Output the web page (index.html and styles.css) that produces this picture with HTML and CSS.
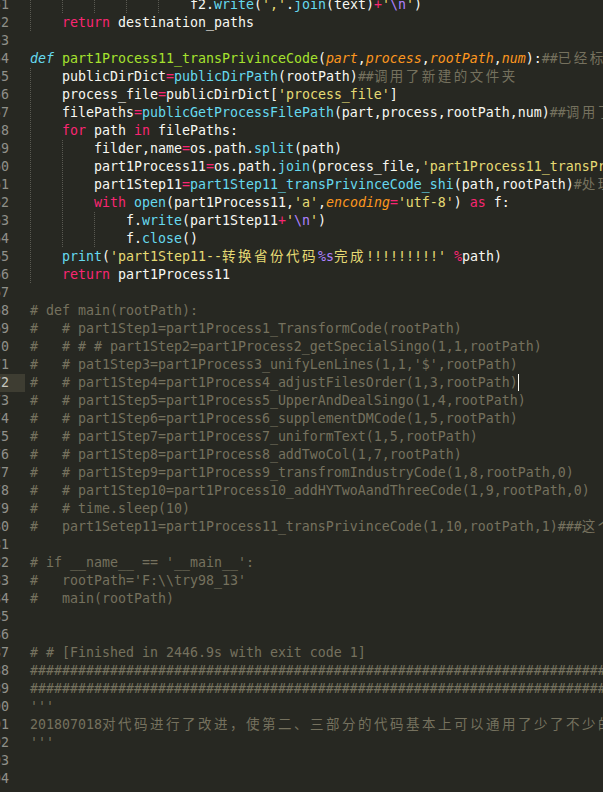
FILE: index.html
```html
<!DOCTYPE html>
<html>
<head>
<meta charset="utf-8">
<link rel="stylesheet" href="styles.css">
</head>
<body>
<div class="editor">
<div class="row"><span class="num">51</span><span class="code"><span class="g"></span><span class="g"></span><span class="g"></span><span class="g"></span><span class="g"></span>f2.<span class="f">write</span>(<span class="s">','</span>.<span class="f">join</span>(text)<span class="o">+</span><span class="s">'<span class="e">\n</span>'</span>)</span></div>
<div class="row"><span class="num">52</span><span class="code"><span class="g"></span><span class="k">return</span> destination_paths</span></div>
<div class="row"><span class="num">53</span><span class="code"></span></div>
<div class="row"><span class="num">54</span><span class="code"><span class="d">def</span> <span class="n">part1Process11_transPrivinceCode</span>(<span class="p">part</span>,<span class="p">process</span>,<span class="p">rootPath</span>,<span class="p">num</span>):<span class="c">##<span class="cj">已经标注的</span></span></span></div>
<div class="row"><span class="num">55</span><span class="code"><span class="g"></span>publicDirDict<span class="o">=</span><span class="f">publicDirPath</span>(rootPath)<span class="c">##<span class="cj">调用了新建的文件夹</span></span></span></div>
<div class="row"><span class="num">56</span><span class="code"><span class="g"></span>process_file<span class="o">=</span>publicDirDict[<span class="s">'process_file'</span>]</span></div>
<div class="row"><span class="num">57</span><span class="code"><span class="g"></span>filePaths<span class="o">=</span><span class="f">publicGetProcessFilePath</span>(part,process,rootPath,num)<span class="c">##<span class="cj">调用了新建的函数</span></span></span></div>
<div class="row"><span class="num">58</span><span class="code"><span class="g"></span><span class="k">for</span> path <span class="k">in</span> filePaths:</span></div>
<div class="row"><span class="num">59</span><span class="code"><span class="g"></span><span class="g"></span>filder,name<span class="o">=</span>os.path.<span class="f">split</span>(path)</span></div>
<div class="row"><span class="num">60</span><span class="code"><span class="g"></span><span class="g"></span>part1Process11<span class="o">=</span>os.path.<span class="f">join</span>(process_file,<span class="s">'part1Process11_transPrivinceCode.txt'</span>)</span></div>
<div class="row"><span class="num">61</span><span class="code"><span class="g"></span><span class="g"></span>part1Step11<span class="o">=</span><span class="f">part1Step11_transPrivinceCode_shi</span>(path,rootPath)<span class="c">#<span class="cj">处理</span></span></span></div>
<div class="row"><span class="num">62</span><span class="code"><span class="g"></span><span class="g"></span><span class="k">with</span> <span class="f">open</span>(part1Process11,<span class="s">'a'</span>,<span class="p">encoding</span><span class="o">=</span><span class="s">'utf-8'</span>) <span class="k">as</span> f:</span></div>
<div class="row"><span class="num">63</span><span class="code"><span class="g"></span><span class="g"></span><span class="g"></span>f.<span class="f">write</span>(part1Step11<span class="o">+</span><span class="s">'<span class="e">\n</span>'</span>)</span></div>
<div class="row"><span class="num">64</span><span class="code"><span class="g"></span><span class="g"></span><span class="g"></span>f.<span class="f">close</span>()</span></div>
<div class="row"><span class="num">65</span><span class="code"><span class="g"></span><span class="f">print</span>(<span class="s">'part1Step11--<span class="cj">转换省份代码</span><span class="e">%s</span><span class="cj">完成</span>!!!!!!!!!'</span> <span class="o">%</span>path)</span></div>
<div class="row"><span class="num">66</span><span class="code"><span class="g"></span><span class="k">return</span> part1Process11</span></div>
<div class="row"><span class="num">67</span><span class="code"></span></div>
<div class="row"><span class="num">68</span><span class="code c"># def main(rootPath):</span></div>
<div class="row"><span class="num">69</span><span class="code c">#   # part1Step1=part1Process1_TransformCode(rootPath)</span></div>
<div class="row"><span class="num">70</span><span class="code c">#   # # # part1Step2=part1Process2_getSpecialSingo(1,1,rootPath)</span></div>
<div class="row"><span class="num">71</span><span class="code c">#   # pat1Step3=part1Process3_unifyLenLines(1,1,'$',rootPath)</span></div>
<div class="row cur"><span class="num">72</span><span class="code c">#   # part1Step4=part1Process4_adjustFilesOrder(1,3,rootPath)<span class="caret"></span></span></div>
<div class="row"><span class="num">73</span><span class="code c">#   # part1Step5=part1Process5_UpperAndDealSingo(1,4,rootPath)</span></div>
<div class="row"><span class="num">74</span><span class="code c">#   # part1Step6=part1Process6_supplementDMCode(1,5,rootPath)</span></div>
<div class="row"><span class="num">75</span><span class="code c">#   # part1Step7=part1Process7_uniformText(1,5,rootPath)</span></div>
<div class="row"><span class="num">76</span><span class="code c">#   # part1Step8=part1Process8_addTwoCol(1,7,rootPath)</span></div>
<div class="row"><span class="num">77</span><span class="code c">#   # part1Step9=part1Process9_transfromIndustryCode(1,8,rootPath,0)</span></div>
<div class="row"><span class="num">78</span><span class="code c">#   # part1Step10=part1Process10_addHYTwoAandThreeCode(1,9,rootPath,0)</span></div>
<div class="row"><span class="num">79</span><span class="code c">#   # time.sleep(10)</span></div>
<div class="row"><span class="num">80</span><span class="code c">#   part1Setep11=part1Process11_transPrivinceCode(1,10,rootPath,1)###<span class="cj">这个</span></span></div>
<div class="row"><span class="num">81</span><span class="code"></span></div>
<div class="row"><span class="num">82</span><span class="code c"># if __name__ == '__main__':</span></div>
<div class="row"><span class="num">83</span><span class="code c">#   rootPath='F:\\try98_13'</span></div>
<div class="row"><span class="num">84</span><span class="code c">#   main(rootPath)</span></div>
<div class="row"><span class="num">85</span><span class="code"></span></div>
<div class="row"><span class="num">86</span><span class="code"></span></div>
<div class="row"><span class="num">87</span><span class="code c"># # [Finished in 2446.9s with exit code 1]</span></div>
<div class="row"><span class="num">88</span><span class="code c">################################################################################</span></div>
<div class="row"><span class="num">89</span><span class="code c">################################################################################</span></div>
<div class="row"><span class="num">90</span><span class="code c">'''</span></div>
<div class="row"><span class="num">91</span><span class="code c">201807018<span class="cj">对代码进行了改进，使第二、三部分的代码基本上可以通用了少了不少的</span></span></div>
<div class="row"><span class="num">92</span><span class="code c">'''</span></div>
<div class="row"><span class="num">93</span><span class="code"></span></div>
<div class="row"><span class="num">94</span><span class="code"></span></div>
</div>
</body>
</html>
```

FILE: styles.css
```css
html, body {
  margin: 0;
  padding: 0;
  background: #272822;
}
body {
  width: 603px;
  height: 792px;
  overflow: hidden;
  font-family: "DejaVu Sans Mono", monospace;
  font-size: 13.29px;
  color: #f8f8f2;
}
.editor {
  margin-top: -4px;
}
.row {
  display: flex;
  height: 18px;
  line-height: 18px;
  white-space: pre;
}
.num {
  flex: none;
  width: 41px;
  margin-left: -16px;
  box-sizing: border-box;
  padding-right: 16px;
  text-align: right;
  color: #90908a;
}
.row.cur .num {
  background: #3e3d32;
  color: #c8c8c0;
}
.code {
  flex: none;
  margin-left: 5px;
  white-space: pre;
}
.g {
  display: inline-block;
  width: 32px;
  height: 18px;
  vertical-align: top;
  background-image: linear-gradient(#5a5a52 50%, transparent 50%);
  background-size: 1px 2px;
  background-repeat: repeat-y;
  background-position: 0 0;
}
.k, .o { color: #f92672; }
.s { color: #e6db74; }
.f { color: #66d9ef; }
.n { color: #a6e22e; }
.p { color: #fd971f; font-style: italic; }
.d { color: #66d9ef; font-style: italic; }
.c { color: #75715e; }
.e { color: #ae81ff; }
.cj {
  font-family: "Noto Sans CJK SC", sans-serif;
  font-size: 13.5px;
  letter-spacing: 2.5px;
  line-height: 0;
}
.caret {
  display: inline-block;
  width: 1px;
  height: 17px;
  margin-right: -1px;
  background: #f8f8f0;
  vertical-align: -4px;
}
```
